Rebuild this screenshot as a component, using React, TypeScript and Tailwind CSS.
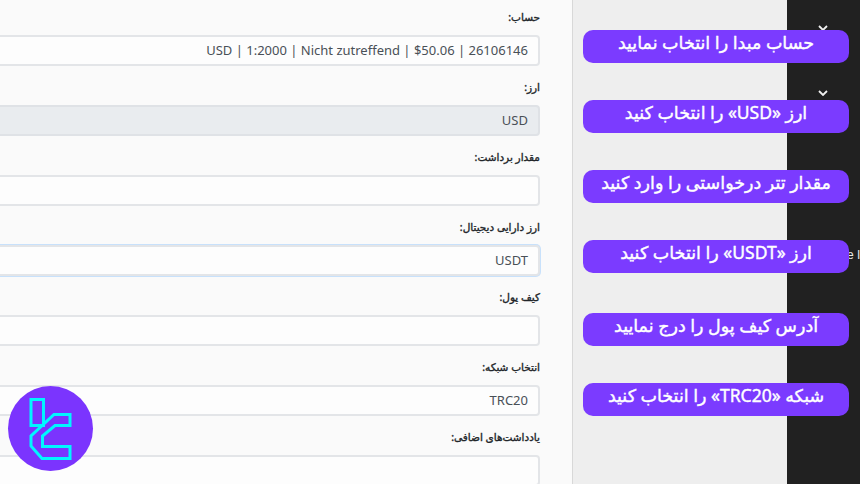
const fields = [
  { label: 'حساب:', value: 'USD | 1:2000 | Nicht zutreffend | $50.06 | 26106146' },
  { label: 'ارز:', value: 'USD', disabled: true },
  { label: 'مقدار برداشت:', value: '' },
  { label: 'ارز دارایی دیجیتال:', value: 'USDT', focused: true },
  { label: 'کیف پول:', value: '' },
  { label: 'انتخاب شبکه:', value: 'TRC20' },
  { label: 'یادداشت‌های اضافی:', value: '' },
]

const steps = [
  { text: 'حساب مبدا را انتخاب نمایید', gap: 'mt-0' },
  { text: 'ارز «USD» را انتخاب کنید', gap: 'mt-[37px]' },
  { text: 'مقدار تتر درخواستی را وارد کنید', gap: 'mt-[37px]' },
  { text: 'ارز «USDT» را انتخاب کنید', gap: 'mt-[37px]' },
  { text: 'آدرس کیف پول را درج نمایید', gap: 'mt-[40px]' },
  { text: 'شبکه «TRC20» را انتخاب کنید', gap: 'mt-[37px]' },
]

const Field = ({ label, value, disabled, focused }: { label: string; value: string; disabled?: boolean; focused?: boolean }) => (
  <div className="w-[700px] h-[70px] flex flex-col items-end shrink-0">
    <div dir="rtl" className="h-[17px] mb-[9px] text-[10.500px] leading-[17px] font-normal [-webkit-text-stroke:0.35px_#212529] text-[#212529]">{label}</div>
    <div
      className={`w-full h-[31px] shrink-0 rounded-[4px] border-2 flex items-center justify-end px-[10px] text-[13px] text-[#495057] ${
        disabled ? 'bg-[#e9ecef] border-[#dfe2e6]' : 'bg-[#fdfdfd] border-[#e3e5e8]'
      } ${focused ? 'border-[#b5d4f4] shadow-[0_0_0_1px_rgba(0,123,255,0.2)]' : ''}`}
    >
      {value}
    </div>
  </div>
)

const Logo = () => (
  <div className="absolute left-[8px] top-[386px] w-[85px] h-[85px] rounded-full bg-[#7b34fe]">
    <svg width="85" height="85" viewBox="0 0 85 85" fill="none" stroke="#00f6ff" strokeWidth="3">
      <path d="M23 13.500H35.500V39.500H23Z" />
      <path d="M46 28.500H62V39.500H47L34.500 50V60.500H62V72.500H34L23 60V50Z" />
    </svg>
  </div>
)

export default function App() {
  return (
    <div className="relative w-[860px] h-[484px] overflow-hidden flex font-['Noto_Sans','DejaVu_Sans',sans-serif]">
      <main className="w-[573px] h-full bg-[#fafafa] border-r border-[#d8d8d8] flex flex-col items-end pt-[9px] pr-[32px] overflow-hidden shrink-0">
        {fields.map((f) => (
          <Field key={f.label} {...f} />
        ))}
      </main>
      <div className="w-[214px] h-full bg-[#eeeeee] shrink-0" />
      <aside className="flex-1 h-full bg-[#212121] relative flex flex-col items-center pt-[25px] text-white overflow-hidden">
        <svg width="10" height="6" viewBox="0 0 10 6" fill="none" stroke="#f0f0f0" strokeWidth="1.800" className="-translate-x-[1px]"><path d="M1 1l4 4 4-4" /></svg>
        <svg width="10" height="6" viewBox="0 0 10 6" fill="none" stroke="#f0f0f0" strokeWidth="1.800" className="mt-[59px] -translate-x-[1px]"><path d="M1 1l4 4 4-4" /></svg>
        <div className="mt-[151px] self-start ml-[60px] font-['Liberation_Sans',sans-serif] text-[12px] leading-[16px] text-[#e8e8e8] whitespace-nowrap">e I</div>
      </aside>
      <div className="absolute left-[583px] top-[30px] w-[266px] flex flex-col">
        {steps.map((s) => (
          <div
            key={s.text}
            dir="rtl"
            className={`${s.gap} h-[33px] rounded-[10px] bg-[#7b3bff] text-white text-[17.500px] font-normal [-webkit-text-stroke:0.4px_#ffffff] pb-[8px] flex items-center justify-center whitespace-nowrap`}
          >
            {s.text}
          </div>
        ))}
      </div>
      <Logo />
    </div>
  )
}
